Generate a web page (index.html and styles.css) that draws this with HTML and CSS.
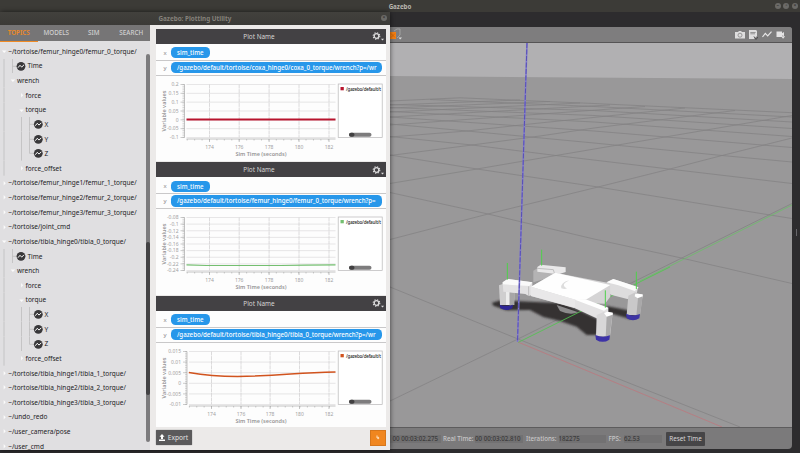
FILE: index.html
```html
<!DOCTYPE html>
<html lang="en">
<head>
<meta charset="utf-8">
<title>Gazebo</title>
<link rel="stylesheet" href="styles.css">
</head>
<body>
<header class="desktop-bar"><span class="desktop-title">Gazebo</span>
  <div class="window-buttons"><i>–</i><i>▫</i><i>×</i></div>
</header>
<main class="desktop">
  <section class="plotter">
    <div class="plotter-title"><span>Gazebo: Plotting Utility</span><i>×</i></div>
    <div class="plotter-body">
      <aside class="sidebar">
        <nav class="tabs"><span class="tab active">TOPICS</span><span class="tab">MODELS</span><span class="tab">SIM</span><span class="tab">SEARCH</span></nav>
        <div class="tree-wrap"><div class="tree" id="tree"></div><div class="scroll"><div class="thumb"></div></div></div>
      </aside>
      <div class="plots">
        <div class="panels" id="panels"></div>
        <footer class="plot-actions">
          <button class="export"><svg width="6" height="7" viewBox="0 0 6 7"><path d="M3 0L5.5 2.7H4V5H2V2.7H.5ZM0 5.5H6V7H0Z" fill="#fff"/></svg>Export</button>
          <button class="add"><svg width="4" height="5" viewBox="0 0 4 5"><path d="M1 .5V3H3.2M2.2 1.8V4.2" fill="none" stroke="#ffe3c2" stroke-width="1"/></svg></button>
        </footer>
      </div>
    </div>
  </section>
  <section class="sim">
    <div class="sim-main">
      <div class="toolbar">
        <svg width="14" height="14" viewBox="0 0 14 14"><path d="M4 3L7 1H10V7L7 10" fill="none" stroke="#aaa" stroke-width=".8"/><path d="M0 4H6V11H0Z" fill="#f58113"/><path d="M1 5.500L5 9.500M5 5.500L1 9.500" stroke="#c65a00" stroke-width=".6"/><path d="M8.5 9.5H12L10.2 11.5Z" fill="#ddd"/></svg>
        <div class="tools">
          <svg width="10" height="8" viewBox="0 0 10 8"><path d="M0 1H3L4 0H6L7 1H10V7.5H0Z" fill="#deddde"/><circle cx="5" cy="4.2" r="2" fill="none" stroke="#858485" stroke-width=".8"/></svg>
          <svg width="9" height="10" viewBox="0 0 9 10"><path d="M0 0H7L8 1V6L5 9H0Z" fill="#deddde"/><path d="M1.3 2.5H6.6M1.3 3.8H6" stroke="#858485" stroke-width=".8"/><path d="M5 6.5L7 9.5L9 7" fill="none" stroke="#4d4c4d"/></svg>
          <svg width="10" height="7" viewBox="0 0 10 7"><path d="M.5 6L3.3 2.4L5.7 4.8L9.5 .7" fill="none" stroke="#e8e7e8" stroke-width="1.2"/></svg>
          <svg width="10" height="8" viewBox="0 0 10 8"><path d="M.5.5H6V2.2L8 1V5L6 4.5V6H.5Z" fill="#e4e3e4"/><path d="M5 5.2H9.2L7.1 7.8Z" fill="#e4e3e4"/></svg>
        </div>
      </div>
      <svg class="scene" width="402" height="384" viewBox="390 43 402 384">
        <defs><filter id="soft"><feGaussianBlur stdDeviation="3"/></filter></defs>
        <rect x="390" y="43" width="402" height="384" fill="#999899"/>
        <path d="M390 43H792V79L390 76Z" fill="#b1b0b2"/>
        <g fill="none" stroke="#838283" stroke-width=".75">
          <path d="M390 287L518 339L740 427M390 192.500L488 214L594 239L680 257.700L792 283.500M390 155L477 169L598 187L770 215L792 218.500M390 136.500L472 145L556 155.500L669 169L792 183.500M390 124L467 131L594 143L722 155.500L792 162M390 117L594 131L792 147.500M390 111.500L594 122L792 136.500M390 107.500L594 115.500L792 128.500M390 104.500L594 110.500L792 122M430 99.500L594 106.500L792 117M460 97.800L594 103.500L792 112.700"/>
          <path d="M390 401L518 339L792 203.500M390 239.500L488 214L598 187L670 169L722 155.500L792 138M390 183.500L477 169L556 155.500L665 137L792 115.500M390 155.500L472 145L540 136L594 128L735 110.500M390 137L467 131L530 124L685 108M390 125L645 106.500M390 117L610 105M390 112L580 103M390 108L550 101.500M390 105L520 100M390 101L460 97.800"/>
        </g>
        <path d="M518 342L722 427" stroke="#bd777d" stroke-width=".8"/>
        <g transform="translate(470 225) scale(.33333)">
          <path d="M66 233L92 226L180 230L280 235L340 262L395 288L380 330L350 330L320 305L270 288L220 276L180 255L110 256L70 242ZM410 243L470 255L500 268L480 282L410 262Z" fill="#343233" filter="url(#soft)"/>
          <path d="M145 352L600 126" stroke="#51c54e" stroke-width="2.500"/>
          <path d="M260 240L325 262Q300 272 270 258Z" fill="#8c8b8c"/>
          <path d="M190 137L202 130L265 140V150L190 172Z" fill="#b4b3b4"/><path d="M202 126L212 119L287 127V141L266 148L202 140Z" fill="#e9e8e9"/><path d="M202 130L250 134L253 144" fill="none" stroke="#aaa" stroke-width="2"/>
          <path d="M87 181L100 176L133 198V240H90Z" fill="#cfcecf"/><path d="M108 200H118V240H108Z" fill="#ececec"/><path d="M119 200L132 203V239L119 242Z" fill="#a7a6a7"/>
          <path d="M98 172L113 162L187 172V210L176 213L166 207L100 200Z" fill="#e3e2e3"/><path d="M98 172L113 162L187 172L178 183L98 178Z" fill="#fafafa"/><path d="M176 184V213" stroke="#aaa" stroke-width="2"/>
          <path d="M89 239Q109 246 129 239L127 250Q109 260 91 250Z" fill="#2d2594"/>
          <path d="M410 172L430 162L504 187L498 218L472 222L425 210L410 202Z" fill="#dddcdd"/><path d="M410 172L430 162L506 187L494 198L445 181Z" fill="#fcfcfc"/>
          <path d="M475 212L496 202L518 210L510 270H470Z" fill="#c9c8c9"/><path d="M496 206L518 208V217L502 219L494 214Z" fill="#fff"/><path d="M504 220L518 214L510 270L499 272Z" fill="#a9a8a9"/>
          <path d="M468 266Q488 276 510 267L508 280Q489 292 470 280Z" fill="#3e34a4"/>
          <path d="M183 185L255 143L420 175L421 215L405 236L350 235L312 249L183 213Z" fill="#d5d4d5"/><path d="M183 185L256 143L421 180L345 226L320 226Z" fill="#fefefe"/><path d="M183 185L320 225V250L183 213Z" fill="#e9e8e9"/><path d="M298 166Q270 173 274 190Q285 194 291 190Q269 180 298 166Z" fill="#ddd"/>
          <path d="M315 225L350 224L415 248V275L380 280L315 250Z" fill="#e4e3e4"/><path d="M315 224L350 224L415 249L402 257Z" fill="#fff"/>
          <path d="M380 270L402 260L428 263L420 334H378Z" fill="#d8d7d8"/><path d="M410 272L428 264L419 335L407 338Z" fill="#aaa9aa"/><path d="M402 264L412 260L428 263V269L410 275Z" fill="#fff"/>
          <path d="M376 330Q398 340 420 331L418 344Q398 357 378 344Z" fill="#3d32a7"/>
          <path d="M112 114V164M215 74V122M499 140V192M406 196V248" stroke="#4ed24a" stroke-width="3"/>
        </g>
        <path d="M527 43L517.500 342" stroke="#827bd0" stroke-width="1.600"/><path d="M527 43L517.500 342" stroke="#4b42b0" stroke-width=".8" stroke-dasharray="5 1.500"/>
        <path d="M640 281L792 205" stroke="#5dcd59" stroke-width=".6"/>
      </svg>
      <div class="status">
        <b class="f1">00 00:03:02.275</b><span class="l1">Real Time:</span><b class="f2">00 00:03:02.810</b><span class="l2">Iterations:</span><b class="f3">182275</b><span class="l3">FPS:</span><b class="f4">62.53</b><button>Reset Time</button>
      </div>
    </div>
    <div class="sim-edge"><i></i></div>
  </section>
</main>
<script src="app.js"></script>
</body>
</html>
```
FILE: styles.css
```css
* { box-sizing: border-box; }
body { margin: 0; width: 800px; height: 453px; overflow: hidden; background: #2d2c2e; font-family: "Noto Sans", "Open Sans", sans-serif; font-size: 6.5px; display: flex; flex-direction: column; }
i { font-style: normal; }
button { border: 0; padding: 0; font-family: inherit; }
.desktop-bar { height: 12px; flex: none; background: #3c3b37; display: grid; grid-template-columns: 1fr auto 1fr; align-items: center; color: #b9b7b0; font-size: 6.2px; font-weight: 700; }
.desktop-title { grid-column: 2; }
.window-buttons { display: flex; gap: 2.400px; justify-content: flex-end; padding-right: 2px; }
.window-buttons i, .plotter-title i { width: 6.200px; height: 6.200px; border-radius: 50%; background: #6b6a67; color: #353431; font-size: 5px; line-height: 5.500px; text-align: center; }
.desktop { display: flex; flex: 1; min-height: 0; }
.plotter { width: 390px; height: 438px; flex: none; display: flex; flex-direction: column; background: #eceae9; box-shadow: 0 0 5px #0009; z-index: 1; border-radius: 3px 3px 0 0; }
.plotter-title { height: 12.500px; flex: none; background: linear-gradient(#42413d, #3b3a37); color: #85827b; display: flex; align-items: center; font-weight: 700; font-size: 6.300px; padding: 0 3px 0 158.500px; justify-content: space-between; white-space: nowrap; }
.plotter-body { display: flex; flex: 1; min-height: 0; }
.sidebar { width: 150px; display: flex; flex-direction: column; background: #e0dfe1; }
.tabs { height: 16.500px; flex: none; display: grid; grid-template-columns: 37.500px 37.500px 37.500px 37.500px; background: #767576; color: #d0cfd0; font-size: 6.300px; font-weight: 500; text-align: center; line-height: 16px; }
.tab.active { color: #f08a24; border-bottom: 1px solid #f08a24; font-weight: 600; }
.tree-wrap { display: flex; flex: 1; min-height: 0; overflow: hidden; padding-top: 3px; }
.tree { flex: 1; width: 146px; }
.row { height: 14.630px; display: flex; align-items: center; color: #232224; font-size: 6.500px; white-space: nowrap; }
.row svg { flex: none; }
.scroll { width: 4px; flex: none; background: #7c7b7d; margin: 9.500px 0 8px; border-radius: 2px; padding-top: 188.500px; }
.thumb { height: 153px; background: #434244; border-radius: 2px; }
.plots { flex: 1; display: flex; flex-direction: column; padding: 4px 4.500px 0 5.500px; }
.panels { display: flex; flex-direction: column; gap: 1px; }
.panel { height: 132.500px; background: #fdfdfd; display: flex; flex-direction: column; }
.panel:last-child { height: 131.500px; }
.panel-head { height: 15px; flex: none; background: #434144; color: #d6d5d6; display: grid; grid-template-columns: 1fr 14px; align-items: center; font-size: 6.400px; }
.panel-head span { text-align: center; padding-left: 0; margin-right: 9px; }
.axis-row { height: 17px; flex: none; display: flex; align-items: center; padding-top: 2.500px; border-bottom: 1px solid #c9c8c9; color: #868586; font-size: 6px; }
.axis-row + .axis-row { height: 15px; padding-top: 0; }
.axis-row label { width: 15.500px; padding-left: 8px; flex: none; }
.pill { height: 11.300px; line-height: 11px; border-radius: 4.500px; background: #2797ea; color: #fff; padding: 0 6px; font-size: 6.150px; font-weight: 500; white-space: nowrap; }
.pill.x { width: 39px; }
.pill.y { width: 211px; }
.chart { display: block; }
.chart text { font-family: "Noto Sans", sans-serif; font-size: 5px; fill: #a2a1a2; }
.chart .axis-title { font-size: 5.500px; font-weight: 600; fill: #979697; }
.chart .legend { font-size: 4.500px; fill: #222; font-weight: 500; }
.plot-actions { display: flex; justify-content: space-between; align-items: center; height: 21.500px; }
.export { width: 36px; height: 15px; background: #5b5a5b; color: #e4e3e4; font-size: 6.600px; display: flex; align-items: center; justify-content: center; gap: 3px; border-radius: 1px; box-shadow: 0 0 1px #333; }
.add { width: 16px; height: 16px; background: #f0861f; border: .500px solid #d6761b; display: flex; align-items: center; justify-content: center; }
.sim { flex: 1; display: flex; padding-top: 15px; }
.sim-main { width: 402px; height: 422px; display: flex; flex-direction: column; background: #7b7a7b; border-radius: 0 3px 4px 0; overflow: hidden; }
.toolbar { height: 16px; flex: none; background: #7e7d7e; border-bottom: 1px solid #555455; display: flex; align-items: center; justify-content: space-between; padding: 0 6px 0 0; }
.tools { display: flex; gap: 4px; align-items: center; }
.scene { display: block; flex: none; }
.status { flex: 1; border-top: 1px solid #5d5c5d; display: flex; align-items: center; white-space: nowrap; color: #c8c7c8; font-size: 6.200px; font-weight: 500; }
.status b { background: #727172; color: #3c3b3c; font-weight: 500; height: 8px; line-height: 8px; font-size: 6.200px; flex: none; }
.status span { flex: none; }
.f1 { width: 51px; padding-left: 2.500px; }
.l1 { width: 34px; padding-left: 2px; }
.f2 { width: 48px; }
.l2 { width: 35.500px; padding-left: 3px; }
.f3 { width: 47.500px; }
.l3 { width: 18px; padding-left: 2.500px; }
.f4 { width: 38px; }
.status button { width: 39px; height: 14px; margin-left: 4px; border-radius: 1px; background: #464547; color: #d7d6d7; font-size: 6.300px; }
.sim-edge { width: 8px; height: 411px; display: flex; align-items: center; justify-content: center; }
.sim-edge i { width: 1px; height: 7px; background: #67666a; }
```
FILE: app.js
```js
const P = '~/tortoise/';
const expanded = [[1, 'Time', 'dot'], [1, 'wrench', 'open'], [2, 'force', 'shut'], [2, 'torque', 'open'], [3, 'X', 'dot'], [3, 'Y', 'dot'], [3, 'Z', 'dot'], [2, 'force_offset', 'shut']];
const rows = [
  [0, P + 'femur_hinge0/femur_0_torque/', 'open'], ...expanded,
  ...[1, 2, 3].map(n => [0, P + `femur_hinge${n}/femur_${n}_torque/`, 'shut']),
  [0, P + 'joint_cmd', 'shut'],
  [0, P + 'tibia_hinge0/tibia_0_torque/', 'open'], ...expanded,
  ...[1, 2, 3].map(n => [0, P + `tibia_hinge${n}/tibia_${n}_torque/`, 'shut']),
  [0, '~/undo_redo', 'shut'], [0, '~/user_camera/pose', 'shut'], [0, '~/user_cmd', 'shut']
];
const line = d => `<path d="${d}" fill="none" stroke="#bebdbe" stroke-width=".8"/>`;
document.getElementById('tree').innerHTML = rows.map(([level, name, kind]) => {
  const textX = kind === 'dot' ? (level === 1 ? 27.5 : 44.5) : 8.2 + level * 8.7;
  let art = '';
  if (level > 0) art += line('M4 0V14.63');
  if (name === 'Time') art += line('M12.5 0V14.63M12.5 7.3H17');
  if (level === 3) art += line('M21.500 0V14.63') + line(`M29.500 0V${name === 'Z' ? 7.3 : 14.63}M29.500 7.300H34`);
  if (kind === 'dot') {
    const c = level === 1 ? 21 : 38.3;
    art += `<circle cx="${c}" cy="7.3" r="4.400" fill="#39383a"/><path d="M${c - 3} 8.700L${c - 1} 6.300L${c + .7} 8.100L${c + 3} 5.800" fill="none" stroke="#fff" stroke-width="1"/>`;
  } else {
    const x = textX - 4;
    art += kind === 'open' ? `<path d="M${x - 2.300} 6.500H${x + 2.300}L${x} 9Z" fill="#fbfbfb"/>` : `<path d="M${x - .500} 5L${x + 1.500} 7.300L${x - .500} 9.600Z" fill="#fbfbfb"/>`;
  }
  return `<div class="row"><svg width="${textX}" height="14.630">${art}</svg><span>${name}</span></div>`;
}).join('');

const plots = [
  { path: 'coxa_hinge0/coxa_0_torque/wrench?p=/wr', ticks: ['0.2', '0.15', '0.1', '0.05', '0', '-0.05', '-0.1'], color: '#b8142e', w: 1.8, curve: 'M186 119H335', x0: 186, g: [209, 238.7, 268.6, 298.5, 328.5] },
  { path: 'femur_hinge0/femur_0_torque/wrench?p=', ticks: ['-0.08', '-0.1', '-0.12', '-0.14', '-0.16', '-0.18', '-0.2', '-0.22', '-0.24'], color: '#74bf70', w: 1.2, curve: 'M186 131.300L206 132H280L305 131.700L335 131.300', x0: 186, g: [209, 238.7, 268.6, 298.5, 328.5] },
  { path: 'tibia_hinge0/tibia_0_torque/wrench?p=/wr', ticks: ['0.015', '0.01', '0.005', '0', '-0.005', '-0.01'], color: '#d1531e', w: 1.4, curve: 'M188.300 105Q211 109 237 109Q262 108.600 290 106.500Q315 105 335 104.500', x0: 188.5, g: [211, 240.5, 269.6, 299, 328.5] }
];
function chart(p) {
  const step = 53 / (p.ticks.length - 1), ax = p.x0 - 2;
  let s = '';
  p.ticks.forEach((t, i) => {
    const y = 84 + i * step;
    s += `<path d="M${p.x0} ${y}H335" stroke="#dcdbdc" stroke-width=".7"/><path d="M${ax - 4} ${y}H${ax}" stroke="#aaa" stroke-width=".6"/><text x="${ax - 6}" y="${y + 1.800}" text-anchor="end">${t}</text>`;
  });
  for (let i = 0; i <= 30; i++) s += `<path d="M${ax - 2} ${84 + i * 53 / 30}H${ax}" stroke="#aaa" stroke-width=".5"/>`;
  s += `<path d="M${ax} 84V137M${p.x0} 138.500H335" stroke="#aaa" stroke-width=".7"/>`;
  const unit = (p.g[1] - p.g[0]) / 4;
  for (let x = p.g[0] - 3 * unit; x < 335; x += unit) s += `<path d="M${x} 138.500V140" stroke="#aaa" stroke-width=".6"/>`;
  p.g.forEach((x, i) => s += `<path d="M${x} 84V137" stroke="#d3d2d3" stroke-width=".8" stroke-dasharray="4 .6"/><path d="M${x} 138.500V141.500" stroke="#aaa" stroke-width=".7"/><text x="${x}" y="148" text-anchor="middle">${174 + 2 * i}</text>`);
  s += `<text class="axis-title" x="260.500" y="155" text-anchor="middle" textLength="51">Sim Time (seconds)</text><text class="axis-title" transform="translate(165.500 110.500) rotate(-90)" text-anchor="middle" textLength="41">Variable values</text>`;
  s += `<path d="${p.curve}" fill="none" stroke="${p.color}" stroke-width="${p.w}"/>`;
  s += `<rect x="337.700" y="83.500" width="44" height="53.500" fill="#fff" stroke="#b7b6b7" stroke-width=".7"/><rect x="340" y="86.500" width="3.300" height="3.300" fill="${p.color}"/><text class="legend" x="345.500" y="90" textLength="35">/gazebo/default/t</text><rect x="348.500" y="132.200" width="22.500" height="4" rx="2" fill="#7d7c7d"/><rect x="348.500" y="132.200" width="5.500" height="4" rx="2" fill="#414041"/>`;
  return `<svg class="chart" width="230" height="84" viewBox="155.500 75.500 230 84">${s}</svg>`;
}
const gear = '<svg width="14" height="12" viewBox="0 0 14 12"><circle cx="4.500" cy="6" r="2.300" fill="none" stroke="#dcdbdc" stroke-width="1.300"/><circle cx="4.500" cy="6" r="3.300" fill="none" stroke="#dcdbdc" stroke-width="1.100" stroke-dasharray="1.300 1.292"/><path d="M9 8.800H12L10.500 10.500Z" fill="#dcdbdc"/></svg>';
document.getElementById('panels').innerHTML = plots.map(p => `<article class="panel"><div class="panel-head"><span>Plot Name</span>${gear}</div><div class="axis-row"><label>x</label><div class="pill x">sim_time</div></div><div class="axis-row"><label>y</label><div class="pill y">/gazebo/default/tortoise/${p.path}</div></div>${chart(p)}</article>`).join('');
```
